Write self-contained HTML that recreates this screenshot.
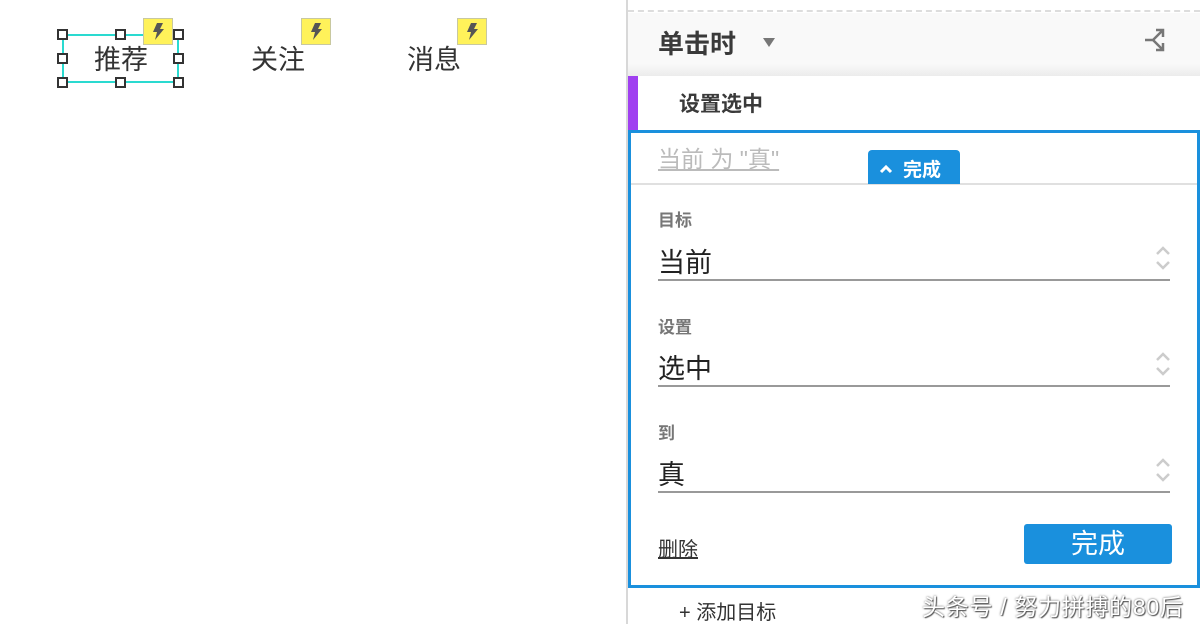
<!DOCTYPE html>
<html><head><meta charset="utf-8"><style>
*{margin:0;padding:0;box-sizing:border-box}
body{width:1200px;height:624px;overflow:hidden;background:#fff;position:relative;font-family:"Liberation Sans","Noto Sans CJK SC",sans-serif;color:#333}
.a{position:absolute}
.h{width:11px;height:11px;border:2px solid #333;background:#fff;position:absolute}
.bolt{position:absolute;width:30px;height:27px;background:#fff25a;border:1px solid #c8c8a0}
.tab{font-size:27px;color:#333}
.lbl{font-size:17px;font-weight:bold;color:#777}
.val{font-size:27px;color:#222}
.line{height:2px;background:#999;width:512px;left:658px}
.arr{left:1154px}
</style></head><body>
<div class="a" style="left:62px;top:34px;width:117px;height:49px;border:2px solid #2adad0"></div>
<div class="h" style="left:57px;top:29px"></div><div class="h" style="left:115px;top:29px"></div><div class="h" style="left:173px;top:29px"></div>
<div class="h" style="left:57px;top:53px"></div><div class="h" style="left:173px;top:53px"></div>
<div class="h" style="left:57px;top:77px"></div><div class="h" style="left:115px;top:77px"></div><div class="h" style="left:173px;top:77px"></div>
<div class="a tab" style="left:94px;top:38px">推荐</div>
<div class="a tab" style="left:251px;top:38px">关注</div>
<div class="a tab" style="left:407px;top:38px">消息</div>
<div class="bolt" style="left:143px;top:18px"><svg width="28" height="25" viewBox="0 0 28 25"><path d="M13 4h6l-3 6h4l-9 11 2-8h-4z" fill="#555"/></svg></div>
<div class="bolt" style="left:301px;top:18px"><svg width="28" height="25" viewBox="0 0 28 25"><path d="M13 4h6l-3 6h4l-9 11 2-8h-4z" fill="#555"/></svg></div>
<div class="bolt" style="left:457px;top:18px"><svg width="28" height="25" viewBox="0 0 28 25"><path d="M13 4h6l-3 6h4l-9 11 2-8h-4z" fill="#555"/></svg></div>
<div class="a" style="left:626px;top:0;width:2px;height:624px;background:#d8d8d8"></div>
<div class="a" style="left:628px;top:10px;width:572px;height:3px;border-top:2px dashed #ddd"></div>
<div class="a" style="left:628px;top:13px;width:572px;height:63px;background:linear-gradient(#f9f9f9 80%,#ececec)"></div>
<div class="a" style="left:658px;top:24px;font-size:26px;font-weight:bold;color:#3a3a3a">单击时</div>
<div class="a" style="left:763px;top:38px;width:0;height:0;border-left:6px solid transparent;border-right:6px solid transparent;border-top:9px solid #777"></div>
<svg class="a" style="left:1144px;top:27px" width="28" height="26" viewBox="0 0 28 26"><path d="M1 13h8l9-9M12 3h7v7M9 13l9 9M12 23h7v-7" stroke="#777" stroke-width="2.5" fill="none"/></svg>
<div class="a" style="left:628px;top:76px;width:10px;height:54px;background:#a040f0"></div>
<div class="a" style="left:679px;top:88px;font-size:21px;font-weight:bold;color:#3a3a3a">设置选中</div>
<div class="a" style="left:628px;top:130px;width:572px;height:458px;border:3px solid #1a90dd"></div>
<div class="a" style="left:631px;top:183px;width:566px;height:2px;background:#e0e0e0"></div>
<div class="a" style="left:658px;top:140px;font-size:23px;color:#bbb;text-decoration:underline">当前 为 "真"</div>
<div class="a" style="left:868px;top:150px;width:92px;height:34px;background:#1a90dd;border-radius:4px 4px 0 0;color:#fff;font-size:19px;font-weight:bold;padding:5px 0 0 11px">
<svg width="14" height="10" viewBox="0 0 14 10" style="vertical-align:2px;margin-right:10px"><path d="M2 8l5-5 5 5" stroke="#fff" stroke-width="3" fill="none"/></svg>完成</div>
<div class="a lbl" style="left:658px;top:206px">目标</div>
<div class="a val" style="left:658px;top:241px">当前</div>
<svg class="a arr" style="top:244px" width="18" height="28" viewBox="0 0 18 28"><path d="M3 10l6-6 6 6M3 18l6 6 6-6" stroke="#ccc" stroke-width="2.5" fill="none"/></svg>
<div class="a line" style="top:279px"></div>
<div class="a lbl" style="left:658px;top:313px">设置</div>
<div class="a val" style="left:658px;top:347px">选中</div>
<svg class="a arr" style="top:350px" width="18" height="28" viewBox="0 0 18 28"><path d="M3 10l6-6 6 6M3 18l6 6 6-6" stroke="#ccc" stroke-width="2.5" fill="none"/></svg>
<div class="a line" style="top:385px"></div>
<div class="a lbl" style="left:658px;top:419px">到</div>
<div class="a val" style="left:658px;top:453px">真</div>
<svg class="a arr" style="top:456px" width="18" height="28" viewBox="0 0 18 28"><path d="M3 10l6-6 6 6M3 18l6 6 6-6" stroke="#ccc" stroke-width="2.5" fill="none"/></svg>
<div class="a line" style="top:491px"></div>
<div class="a" style="left:658px;top:533px;font-size:20px;color:#333;text-decoration:underline">删除</div>
<div class="a" style="left:1024px;top:524px;width:148px;height:40px;background:#1a90dd;border-radius:3px;color:#fff;font-size:27px;text-align:center;line-height:40px">完成</div>
<div class="a" style="left:679px;top:596px;font-size:20px;color:#333">+ 添加目标</div>
<div class="a" style="left:922px;top:588px;font-size:23px;letter-spacing:0.7px;color:#fff;text-shadow:0 0 2px #555,1px 1px 1px #555">头条号 / 努力拼搏的80后</div>
</body></html>
